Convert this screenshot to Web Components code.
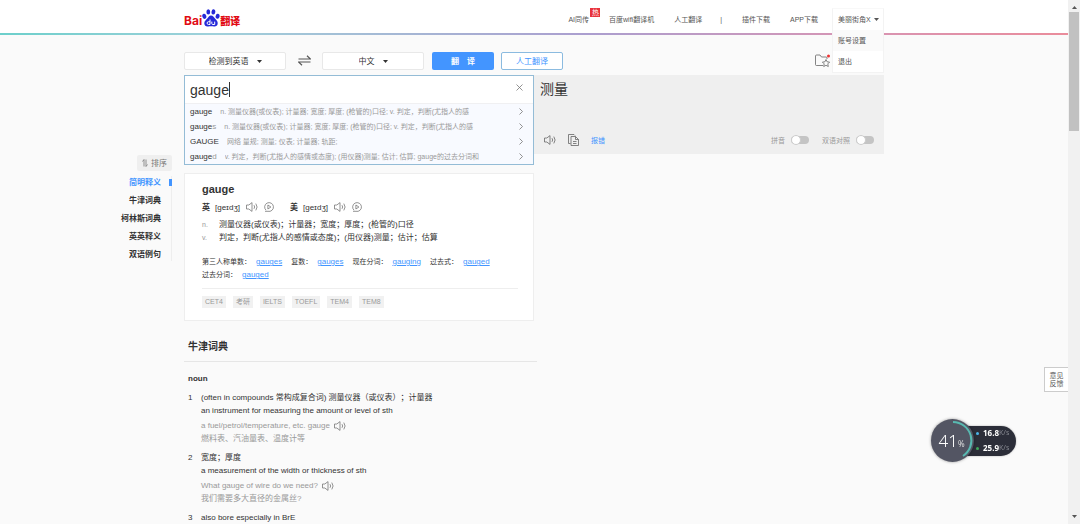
<!DOCTYPE html>
<html lang="zh-CN">
<head>
<meta charset="utf-8">
<title>百度翻译</title>
<style>
html, body { margin: 0; height: 100%; overflow: hidden; }
body { font: 8px/13px "Liberation Sans", "Noto Sans CJK SC", sans-serif; text-spacing-trim: space-all; color: #333; background: #fafafa; }
</style>
</head>
<body>
<translate-app></translate-app>
<script>
const define = (name, html, setup) => {
  const tpl = document.createElement('template');
  tpl.innerHTML = '<style>*{box-sizing:border-box}button,input,select{font:inherit;color:inherit;margin:0;padding:0;border:0;background:none;outline:0}svg{display:block}a{color:inherit;text-decoration:none}</style>' + html;
  customElements.define(name, class extends HTMLElement {
    constructor() {
      super();
      this.attachShadow({ mode: 'open' }).append(tpl.content.cloneNode(true));
    }
    connectedCallback() { if (setup) setup(this, this.shadowRoot); }
  });
};

const ICONS = {
  speaker: [12, 10, '<path d="M.5 3h2.300L6 .6v8.800L2.800 7H.5z"/><path d="M8 3.200q1.300 1.800 0 3.600M9.800 1.600q2.600 3.400 0 6.800"/>'],
  play: [10, 10, '<path d="M2 8.200A4.400 4.400 0 1 1 4 9.300M1 9.300h3"/><path d="M3.900 3v4l3-2z"/>'],
  copy: [11, 12, '<path d="M2.500 9.500h-2v-9h5.500l1 1"/><path d="M3 2.500h4.500l3 3v6H3z"/><path d="M7.500 2.500v3h3M5 7.500h3.500M5 9.500h3.500"/>'],
  swap: [13, 11, '<path d="M.5 4h12L9 .8M12.500 7H.5L4 10.200" stroke-width="1.200"/>'],
  folder: [16, 14, '<path d="M8 11.500H1.500q-1 0-1-1V2q0-1 1-1H5l1.500 2H11q1 0 1 1v1"/><path d="M11 5.500l1.100 2.300 2.500.3-1.800 1.800.5 2.600-2.300-1.200-2.300 1.200.5-2.600-1.800-1.800 2.500-.3z"/><circle cx="13.500" cy="2" r="1.500" fill="#e33" stroke="none"/>'],
  caret: [5, 3, '<path d="M0 0h5L2.500 3z" fill="currentColor" stroke="none"/>'],
  close: [7, 7, '<path d="M.5.5l6 6M6.500.5l-6 6"/>'],
  chevron: [4, 7, '<path d="M.5.5l3 3-3 3"/>'],
  sort: [6, 8, '<path d="M2 7.500v-7L.5 2.500M4 .5v7l1.500-2"/>'],
  paw: [18, 18, '<g fill="#2529d8" stroke="none"><ellipse cx="2.300" cy="7.300" rx="2" ry="2.600" transform="rotate(-15 2.300 7.300)"/><ellipse cx="6.300" cy="2.900" rx="1.900" ry="2.700"/><ellipse cx="11.400" cy="2.900" rx="1.900" ry="2.700" transform="rotate(8 11.400 2.900)"/><ellipse cx="15.600" cy="7.300" rx="2" ry="2.500" transform="rotate(12 15.600 7.300)"/><path d="M9 6.600c2 0 2.800 1.500 4 3 1.400 1.600 2.900 2.700 2.700 4.900-.2 2.400-1.900 3.200-3.700 3-1.400-.2-4.200-.2-5.800 0-2 .3-3.800-.7-3.900-3-.1-2.400 1.700-3.300 3-4.900 1.100-1.400 1.900-3 3.700-3z"/></g><g stroke="#fff" stroke-width="1"><path d="M8 10.500v5H6.600q-1.500 0-1.500-1.400t1.500-1.400H8M9.800 12.600v1.900q0 1 1 1h1.900v-2.900"/></g>']
};
customElements.define('ui-icon', class extends HTMLElement {
  connectedCallback() {
    const [w, h, body] = ICONS[this.getAttribute('name')];
    const root = this.shadowRoot || this.attachShadow({ mode: 'open' });
    root.innerHTML = `<style>:host{display:block;flex:none}svg{display:block}</style><svg width="${w}" height="${h}" viewBox="0 0 ${w} ${h}" fill="none" stroke="currentColor" stroke-width=".8" aria-hidden="true">${body}</svg>`;
  }
});

define('site-logo', `<style>
:host{display:block}
a{display:flex;align-items:flex-end;color:#e10b14;font:bold 12px/12px Inter,"Noto Sans CJK SC",sans-serif}
.cn{font-size:10px;font-weight:900}
</style><a href="#" aria-label="百度翻译"><span>Bai</span><ui-icon name="paw"></ui-icon><span class="cn">翻译</span></a>`);

define('account-menu', `<style>
:host{display:block;position:relative;width:52px;height:21px}
.box{position:absolute;z-index:5;left:0;top:-1px;width:100%;background:#fff;border:1px solid #f3f3f3;border-top-color:#f8f8f8}
button,a{display:flex;align-items:center;gap:3px;height:21px;width:100%;padding-left:5px;white-space:nowrap}
a:first-of-type{background:#fafafa}
</style><div class="box"><button type="button">美丽街角X<ui-icon name="caret"></ui-icon></button><a href="#">账号设置</a><a href="#">退出</a></div>`);

define('site-header', `<style>
:host{display:block;background:#fff;height:35px;font-size:7px;color:#555}
.row{display:flex;align-items:center;justify-content:space-between;max-width:700px;height:33px;margin:auto;padding-top:5px}
.line{height:2px;background:linear-gradient(90deg,#6ccfcb,#9fd0da 20%,#ab9ecf 55%,#d795b4 80%,#ea8c9b)}
nav{display:flex;align-items:center;gap:20px;white-space:nowrap}
site-logo{margin-top:-2px}
.hot{position:relative}
.sep{margin-left:-2px}
.badge{position:absolute;left:22px;top:-5px;width:10px;height:9px;background:#e8323c;color:#fff;line-height:9px;text-align:center}
account-menu{margin-left:-6px}
</style><div class="row"><site-logo></site-logo><nav>
<a class="hot" href="#">AI同传<span class="badge">热</span></a><a href="#">百度wifi翻译机</a><a href="#">人工翻译</a><span class="sep">|</span><a href="#">插件下载</a><a href="#">APP下载</a><account-menu></account-menu></nav></div><div class="line"></div>`);

define('lang-select', `<style>
:host{display:flex;align-items:center;justify-content:center;gap:8px;width:102px;height:18px;background:#fff;border:1px solid #e8e8e8;border-radius:2px}
select{appearance:none;height:16px}
</style><select></select><ui-icon name="caret"></ui-icon>`, (el, root) => {
  const s = root.querySelector('select');
  s.setAttribute('aria-label', el.getAttribute('label'));
  s.replaceChildren(new Option(el.getAttribute('value')));
});

define('translate-toolbar', `<style>
:host{display:flex;align-items:center;height:18px}
.swap{width:36px;display:grid;place-items:center;color:#555;padding-bottom:2px}
.go,.human{width:62px;height:18px;border-radius:2px}
.go{background:#4395ff;color:#fff;margin:0 7px 0 8px;font-weight:bold;white-space:pre}
.human{border:1px solid #8bbbe0;background:#fff;color:#4395ff}
.fav{margin-left:auto;margin-right:53px;color:#666}
</style><lang-select label="源语言" value="检测到英语"></lang-select><button class="swap" type="button" aria-label="交换语言"><ui-icon name="swap"></ui-icon></button><lang-select label="目标语言" value="中文"></lang-select><button class="go" type="button">翻　译</button><button class="human" type="button">人工翻译</button><button class="fav" type="button" aria-label="收藏夹"><ui-icon name="folder"></ui-icon></button>`);

define('suggest-row', `<style>
:host{display:flex;align-items:center;height:15px;padding:0 10px 0 5px;font-size:7px;color:#999;white-space:nowrap}
b{font-weight:normal;font-size:8px;color:#333}
.desc{margin-left:8px;flex:1;overflow:hidden}
ui-icon{color:#777}
.rest{font-size:8px}
</style><b><slot name="match"></slot></b><span class="rest"><slot name="rest"></slot></span><span class="desc"><slot></slot></span><ui-icon name="chevron"></ui-icon>`);

define('source-panel', `<style>
:host{display:block;background:#fff;border:1px solid #94bcd6}
.entry{display:flex;align-items:center;height:27px;padding:0 10px 0 5px}
input{field-sizing:content;min-width:0;font-size:14px;line-height:18px;color:#333;caret-color:transparent}
.caret{width:1px;height:15px;background:#333}
button{align-self:flex-start;margin:8px 0 0 auto;color:#777}
.list{background:#f8faff;border-top:1px solid #f0f0f2}
</style><div class="entry"><input aria-label="输入文本" value="gauge"><span class="caret"></span><button type="button" aria-label="清空"><ui-icon name="close"></ui-icon></button></div>
<div class="list">
<suggest-row><span slot="match">gauge</span>n. 测量仪器(或仪表); 计量器; 宽度; 厚度; (枪管的)口径; v. 判定，判断(尤指人的感</suggest-row>
<suggest-row><span slot="match">gauge</span><span slot="rest">s</span>n. 测量仪器(或仪表); 计量器; 宽度; 厚度; (枪管的)口径; v. 判定，判断(尤指人的感</suggest-row>
<suggest-row><span slot="match">GAUGE</span>网络 量规; 测量; 仪表; 计量器; 轨距;</suggest-row>
<suggest-row><span slot="match">gauge</span><span slot="rest">d</span>v. 判定，判断(尤指人的感情或态度); (用仪器)测量; 估计; 估算; gauge的过去分词和</suggest-row>
</div>`);

define('toggle-switch', `<style>
:host{display:block}
label{display:flex;align-items:center;gap:6px}
input{appearance:none;width:18px;height:8px;border-radius:4px;background:#c4c4c4;display:flex;align-items:center}
input::before{content:"";width:10px;height:10px;border-radius:50%;background:#fff;border:1px solid #ccc;flex:none;box-sizing:border-box}
</style><label><slot></slot><input type="checkbox" role="switch"></label>`, (el, root) =>
  root.querySelector('input').setAttribute('aria-label', el.textContent));

define('target-panel', `<style>
:host{display:flex;flex-direction:column;justify-content:space-between;height:79px;background:#efefef;padding:4px 10px 7px 6px}
.text{font-size:14px;line-height:20px}
.bar{display:flex;align-items:center;font-size:7px;color:#999;height:14px}
button{color:#666;margin-right:12px;margin-left:4px}
.copy{margin:0 12px 0 0}
a{color:#4395ff}
toggle-switch{margin-left:13px}
toggle-switch:first-of-type{margin-left:auto}
</style><div class="text">测量</div><div class="bar"><button type="button" aria-label="朗读"><ui-icon name="speaker"></ui-icon></button><button class="copy" type="button" aria-label="复制"><ui-icon name="copy"></ui-icon></button><a href="#">报错</a><toggle-switch>拼音</toggle-switch><toggle-switch>双语对照</toggle-switch></div>`);

define('side-nav', `<style>
:host{display:flex;flex-direction:column;align-items:flex-end}
button{display:flex;align-items:center;gap:3px;height:16px;padding:0 5px;background:#efefef;color:#777;border-radius:2px;margin-bottom:5px}
nav{display:flex;flex-direction:column;gap:5px;text-align:right;border-right:1px solid #eee;font-weight:bold;font-size:8px}
a{position:relative;padding-right:10px;line-height:13px;height:13px}
.on{color:#4395ff}
.on::after{content:"";position:absolute;right:-1px;top:3px;width:3px;height:7px;background:#4395ff}
</style><button type="button"><ui-icon name="sort"></ui-icon>排序</button><nav><a class="on" href="#">简明释义</a><a href="#">牛津词典</a><a href="#">柯林斯词典</a><a href="#">英英释义</a><a href="#">双语例句</a></nav>`);

define('pronounce-item', `<style>
:host{display:flex;align-items:center}
b{margin-right:5px}
button{color:#777;margin-left:6px}
</style><b><slot></slot></b><span>[ɡeɪdʒ]</span><button type="button" aria-label="播放"><ui-icon name="speaker"></ui-icon></button><button type="button" aria-label="跟读"><ui-icon name="play"></ui-icon></button>`);

define('word-form', `<style>
:host{display:flex;font-size:7px;white-space:nowrap}
a{margin-left:5px;font-size:8px;color:#4395ff;text-decoration:underline}
</style><span><slot name="label"></slot></span><a href="#"><slot></slot></a>`);

define('entry-card', `<style>
:host{display:block;background:#fff;border:1px solid #eee;padding:8px 15px 12px 17px}
h1{margin:0;font-size:11px;line-height:15px}
.pron{display:flex;gap:16px;margin:3px 0 4px;height:14px}
dl{display:grid;grid-template-columns:17px 1fr;margin:0}
dt{font-size:7px;color:#999}dd{margin:0}
.forms{display:flex;flex-wrap:wrap;column-gap:9px;margin:11px 0 7px}
.tags{display:flex;gap:7px;border-top:1px solid #eee;padding-top:7px;font-size:7px;line-height:12px;color:#999}
.tags span{background:#f1f1f1;padding:0 3px}
</style><h1>gauge</h1><div class="pron"><pronounce-item>英</pronounce-item><pronounce-item>美</pronounce-item></div>
<dl><dt>n.</dt><dd>测量仪器(或仪表)；计量器；宽度；厚度；(枪管的)口径</dd><dt>v.</dt><dd>判定，判断(尤指人的感情或态度)；(用仪器)测量；估计；估算</dd></dl>
<div class="forms"><word-form><span slot="label">第三人称单数：</span>gauges</word-form><word-form><span slot="label">复数：</span>gauges</word-form><word-form><span slot="label">现在分词：</span>gauging</word-form><word-form><span slot="label">过去式：</span>gauged</word-form><word-form><span slot="label">过去分词：</span>gauged</word-form></div>
<div class="tags"><span>CET4</span><span>考研</span><span>IELTS</span><span>TOEFL</span><span>TEM4</span><span>TEM8</span></div>`);

define('dict-sense', `<style>
:host{display:grid;grid-template-columns:13px 1fr;margin-bottom:6px}
.eg{color:#999;margin-top:2px}
.eg ::slotted(*){display:flex;align-items:center;gap:4px}
</style><span><slot name="num"></slot></span><div><slot></slot><div class="eg"><slot name="eg"></slot></div></div>`);

define('oxford-section', `<style>
:host{display:block;padding-left:4px}
h2{margin:0 -3px 0 -4px;padding:0 4px 6px;border-bottom:1px solid #e6e6e6;font-size:10px;line-height:16px}
h3{margin:10px 0 6px;font-size:8px;line-height:13px}
ui-icon{color:#777}
</style><h2>牛津词典</h2><h3>noun</h3>
<dict-sense><span slot="num">1</span><div>(often in compounds 常构成复合词) 测量仪器（或仪表）；计量器</div><div>an instrument for measuring the amount or level of sth</div><div slot="eg">a fuel/petrol/temperature, etc. gauge<ui-icon name="speaker"></ui-icon></div><div slot="eg">燃料表、汽油量表、温度计等</div></dict-sense>
<dict-sense><span slot="num">2</span><div>宽度；厚度</div><div>a measurement of the width or thickness of sth</div><div slot="eg">What gauge of wire do we need?<ui-icon name="speaker"></ui-icon></div><div slot="eg">我们需要多大直径的金属丝?</div></dict-sense>
<dict-sense><span slot="num">3</span><div>also bore especially in BrE</div></dict-sense>`);

define('feedback-tab', `<style>
:host{display:block;position:fixed;right:12px;top:367px}
a{display:grid;place-content:center;width:24px;height:25px;background:#fff;border:1px solid #ccc;border-right:0;font-size:7px;line-height:8px;color:#555;text-align:center}
</style><a href="#">意见<br>反馈</a>`);

define('net-meter', `<style>
:host{display:flex;align-items:center;position:fixed;left:931px;top:419px;color:#fff;font-family:"Noto Sans",sans-serif}
.dial{position:relative;z-index:1;width:43px;height:43px;border-radius:50%;background:#535563;box-shadow:0 0 3px #0006;display:flex;align-items:baseline;justify-content:center;line-height:43px;padding-right:2px}
.dial b{font-size:17px;font-weight:300}
.dial svg{position:absolute;inset:0}
.rates{width:57px;height:30px;margin-left:-15px;border-radius:0 15px 15px 0;background:#2c2e39;display:flex;flex-direction:column;justify-content:space-around;padding-left:17px;box-shadow:0 0 2px #0005}
.rates div{display:flex;align-items:center;line-height:14px}
.rates i{width:3px;height:3px;border-radius:50%;background:#4bb4e8;margin-right:4px}
.rates .down{background:#3fa85a}
.rates b{font-size:8px}
small{font-size:7px;color:#85878f}
.dial small{color:#ddd;font-size:8px}
</style><div class="dial"><b>41</b><small>%</small><svg width="43" height="43" fill="none" stroke="#58b8b0" stroke-width="2"><path d="M22 3A18.500 18.500 0 0 1 32 37"/></svg></div><div class="rates"><div><i></i><b>16.8</b><small>K/s</small></div><div><i class="down"></i><b>25.9</b><small>K/s</small></div></div>`);

define('page-scrollbar', `<style>
:host{display:flex;flex-direction:column;align-items:center;background:#f1f1f1;color:#555;padding:6px 0}
.thumb{width:10px;height:119px;background:#c1c1c1;margin:3px 0 auto}
.up{transform:rotate(180deg)}
</style><ui-icon class="up" name="caret"></ui-icon><div class="thumb"></div><ui-icon name="caret"></ui-icon>`);

define('translate-app', `<style>
:host{display:grid;grid-template-columns:minmax(0,1fr) 12px;height:100vh}
.page{overflow:hidden;min-width:0}
main{display:grid;grid-template-columns:1fr minmax(0,700px) 1fr}
side-nav{margin:120px 12px 0 0}
.content{padding-top:17px}
.panes{display:grid;grid-template-columns:1fr 1fr;align-items:start;margin-top:5px}
entry-card{margin:8px 0 18px}
.left{width:50%}
</style><div class="page"><site-header></site-header><main><side-nav></side-nav><div class="content"><translate-toolbar></translate-toolbar><div class="panes"><source-panel></source-panel><target-panel></target-panel></div><div class="left"><entry-card></entry-card><oxford-section></oxford-section></div></div></main></div><page-scrollbar></page-scrollbar><feedback-tab></feedback-tab><net-meter></net-meter>`);
</script>
</body>
</html>
